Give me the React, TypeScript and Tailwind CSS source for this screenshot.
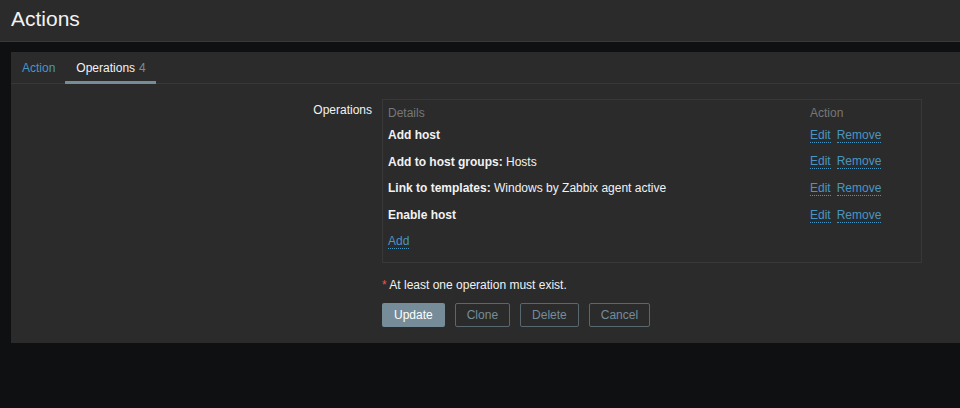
import React from 'react';

const ops = [
  { label: 'Add host', value: '' },
  { label: 'Add to host groups:', value: 'Hosts' },
  { label: 'Link to templates:', value: 'Windows by Zabbix agent active' },
  { label: 'Enable host', value: '' },
];

const linkCls = 'text-[#4796c4] border-b border-dotted border-[#4796c4] leading-[14px] cursor-pointer';
const altBtn = 'h-[24px] px-[11px] rounded-[2px] border border-[#59676f] text-[#768d99]';

export default function App() {
  return (
    <div
      className="h-[408px] w-[960px] overflow-hidden bg-[#0e1012] text-[12px] text-[#f2f2f2] flex flex-col"
      style={{ fontFamily: '"Liberation Sans", Arial, sans-serif' }}
    >
      {/* Header */}
      <header className="h-[42px] shrink-0 bg-[#2b2b2b] border-b border-[#383838] flex items-center pl-[11px]">
        <h1 className="text-[21px] leading-none text-[#f2f2f2] -mt-[4px]">Actions</h1>
      </header>

      <div className="flex-1 pl-[11px] pt-[10px]">
        <div className="bg-[#2b2b2b] h-[291px]">
          {/* Tabs */}
          <div className="h-[32px] border-b border-[#383838] flex">
            <div className="pl-[11px] pr-[10px] flex items-center text-[#4796c4]">Action</div>
            <div className="relative pl-[11px] pr-[10px] flex items-center">
              <span>Operations</span>
              <span className="ml-[4px] text-[#768d99]">4</span>
              <div className="absolute left-0 right-0 bottom-[-1px] h-[3px] bg-[#768d99]" />
            </div>
          </div>

          {/* Form */}
          <div className="flex pt-[15px]">
            <div className="w-[371px] shrink-0 text-right pr-[10px] pt-[4px] leading-[14px]">Operations</div>
            <div className="flex flex-col">
              <div className="w-[540px] h-[164px] border border-[#383838] px-[5px] pt-[4px]">
                <div className="flex text-[#777] leading-[18px]">
                  <div className="w-[422px]">Details</div>
                  <div>Action</div>
                </div>
                {ops.map((o) => (
                  <div key={o.label} className="flex h-[26.6px] items-center">
                    <div className="w-[422px]">
                      <span className="font-bold">{o.label}</span>
                      {o.value && <span> {o.value}</span>}
                    </div>
                    <div className="flex gap-[6px]">
                      <span className={linkCls}>Edit</span>
                      <span className={linkCls}>Remove</span>
                    </div>
                  </div>
                ))}
                <div className="h-[26px] flex items-center">
                  <span className={linkCls}>Add</span>
                </div>
              </div>

              <div className="mt-[15px] leading-[14px]">
                <span className="text-[#e45959]">*</span> At least one operation must exist.
              </div>

              <div className="flex gap-[10px] mt-[11px]">
                <button className="h-[24px] px-[12px] rounded-[2px] bg-[#768d99] text-white">Update</button>
                <button className={altBtn}>Clone</button>
                <button className={altBtn}>Delete</button>
                <button className={altBtn}>Cancel</button>
              </div>
            </div>
          </div>
        </div>
      </div>
    </div>
  );
}
